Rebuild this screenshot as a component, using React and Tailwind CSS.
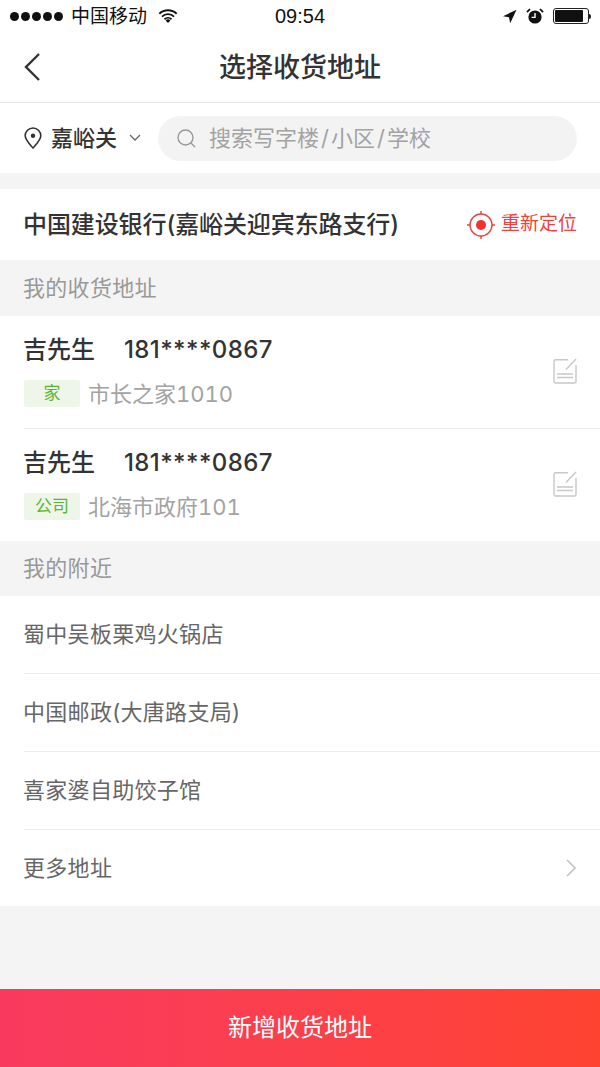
const FONT = "font-['Inter','Noto_Sans_CJK_SC',sans-serif]";

const addresses = [
  { id: 1, tag: '家', text: '市长之家1010', height: 'h-[113px]', border: 'border-b border-[#ececec]' },
  { id: 2, tag: '公司', text: '北海市政府101', height: 'h-[112px]', border: '' },
];

const nearby = ['蜀中吴板栗鸡火锅店', '中国邮政(大唐路支局)', '喜家婆自助饺子馆'];

function StatusBar() {
  return (
    <div className="relative flex h-[32px] items-center pl-[10px] pr-[9px] text-[#111]">
      <div className="flex items-center gap-[2px]">
        {[0, 1, 2, 3, 4].map((i) => (
          <span key={i} className="h-[9px] w-[9px] rounded-full bg-[#111]" />
        ))}
      </div>
      <span className="ml-[8px] text-[19px] leading-none">中国移动</span>
      <svg className="ml-[11px]" width="20" height="15" viewBox="0 0 20 15" fill="#111">
        <path d="M10 14 7.6 11.4a3.4 3.4 0 0 1 4.8 0z" />
        <path d="M5.9 9.6a5.9 5.9 0 0 1 8.2 0l-1.2 1.3a4.2 4.2 0 0 0-5.8 0z" />
        <path d="M3.3 6.9a9.6 9.6 0 0 1 13.4 0l-1.3 1.4a7.7 7.7 0 0 0-10.8 0z" />
        <path d="M.7 4.1a13.4 13.4 0 0 1 18.6 0L18 5.5a11.4 11.4 0 0 0-16 0z" />
      </svg>
      <span className="absolute left-[275px] top-[5px] font-['Liberation_Sans',sans-serif] text-[20px] leading-[22px]">09:54</span>
      <div className="ml-auto flex items-center">
        <svg width="15" height="15" viewBox="0 0 15 15" fill="#111">
          <path d="M14.5.8 1 7.2l6 1 1.2 6z" />
        </svg>
        <svg className="ml-[9px]" width="18" height="18" viewBox="0 0 18 18">
          <circle cx="9" cy="10" r="6.6" fill="#111" />
          <path d="M9 6v4.4H5.6" fill="none" stroke="#fff" strokeWidth="1.4" />
          <path d="M1 5.2 4 2M17 5.2 14 2" stroke="#111" strokeWidth="1.8" />
        </svg>
        <div className="ml-[9px] flex h-[16px] w-[36px] items-center rounded-[3px] border border-[#222] p-[1px]">
          <div className="h-full w-[28px] rounded-[1px] bg-[#111]" />
        </div>
        <div className="h-[5px] w-[2px] rounded-r-full bg-[#222]" />
      </div>
    </div>
  );
}

function EditIcon() {
  return (
    <svg className="-mt-[2px]" width="24" height="26" viewBox="0 0 24 26" fill="none" stroke="#c8c8c8" strokeWidth="1.4">
      <path d="M15 1.700H2.500A1.500 1.500 0 0 0 1 3.200V23.500A1.500 1.500 0 0 0 2.500 25H21.500A1.500 1.500 0 0 0 23 23.500V7" />
      <path d="M13 11.500 23 1" />
      <path d="M4 16H20M4 19.500H20" />
    </svg>
  );
}

function SectionHeader({ title, height }) {
  return (
    <div className={`flex items-center bg-[#f4f4f4] pl-[23px] text-[22px] tracking-[0.3px] text-[#999] ${height}`}>{title}</div>
  );
}

export default function App() {
  return (
    <div className={`flex h-[1067px] w-[600px] flex-col overflow-hidden bg-[#f4f4f4] ${FONT}`}>
      {/* Header */}
      <div className="bg-white">
        <StatusBar />
        <div className="relative flex h-[71px] items-center justify-center border-b border-[#e6e6e6]">
          <svg className="absolute left-[23px] top-[20px]" width="18" height="30" viewBox="0 0 18 30" fill="none" stroke="#333" strokeWidth="2.400">
            <path d="M16 2 3 15l13 13" />
          </svg>
          <h1 className="text-[27px] font-medium leading-none text-[#333]">选择收货地址</h1>
        </div>
      </div>

      {/* Search */}
      <div className="flex h-[70px] items-center bg-white pl-[24px] pr-[23px]">
        <svg width="18" height="22" viewBox="0 0 18 22" fill="none" stroke="#333" strokeWidth="1.600">
          <path d="M9 21C5 16.500 1.200 12.800 1.200 8.800a7.800 7.800 0 0 1 15.600 0C16.800 12.800 13 16.500 9 21z" />
          <circle cx="9" cy="8.800" r="2.200" fill="#333" stroke="none" />
        </svg>
        <span className="ml-[9px] text-[22px] font-medium leading-none text-[#333]">嘉峪关</span>
        <svg className="ml-[12px]" width="12" height="8" viewBox="0 0 12 8" fill="none" stroke="#666" strokeWidth="1.300">
          <path d="m1 1 5 5 5-5" />
        </svg>
        <div className="ml-[17px] flex h-[45px] flex-1 items-center rounded-full bg-[#f3f3f3] pl-[19px]">
          <svg width="19" height="19" viewBox="0 0 19 19" fill="none" stroke="#999" strokeWidth="1.400">
            <circle cx="8.500" cy="8.500" r="7.500" />
            <path d="m14 14 4 4" />
          </svg>
          <span className="ml-[13px] text-[22px] leading-none text-[#a3a3a3]">
            搜索写字楼<span className="mx-[2px]">/</span>小区<span className="mx-[2px]">/</span>学校
          </span>
        </div>
      </div>

      {/* Current location */}
      <div className="mt-[16px] flex h-[71px] items-center bg-white pl-[23px] pr-[23px]">
        <span className="text-[24px] font-medium leading-none tracking-[-0.1px] text-[#333]">中国建设银行(嘉峪关迎宾东路支行)</span>
        <svg className="ml-auto" width="28" height="28" viewBox="0 0 28 28" fill="none" stroke="#e8453f" strokeWidth="1.400">
          <circle cx="14" cy="14" r="11" />
          <circle cx="14" cy="14" r="5" fill="#f5302e" stroke="none" />
          <path d="M14 0v3M14 25v3M0 14h3M25 14h3" />
        </svg>
        <span className="ml-[6px] text-[19px] text-[#f2413c]">重新定位</span>
      </div>

      <SectionHeader title="我的收货地址" height="h-[56px]" />

      {/* Saved addresses */}
      <div className="bg-white pl-[24px]">
        {addresses.map((a) => (
          <div key={a.id} className={`flex items-center pr-[23px] ${a.height} ${a.border}`}>
            <div className="flex-1">
              <div className="-mt-[2px] flex items-center text-[24px] font-medium leading-[30px] text-[#333]">
                <span className="-ml-[1px] w-[101px]">吉先生</span>
                <span className="tracking-[0.4px]">181****0867</span>
              </div>
              <div className="mt-[15px] flex items-center">
                <span className="flex h-[27px] w-[56px] items-center justify-center rounded-[2px] bg-[#eef6ea] text-[17px] text-[#5cb531]">
                  {a.tag}
                </span>
                <span className="ml-[8px] text-[22px] leading-none tabular-nums text-[#a3a3a3]">{a.text}</span>
              </div>
            </div>
            <EditIcon />
          </div>
        ))}
      </div>

      <SectionHeader title="我的附近" height="h-[55px]" />

      {/* Nearby */}
      <div className="bg-white pl-[24px] text-[22px] tracking-[0.3px] text-[#666]">
        {nearby.map((name) => (
          <div key={name} className="flex h-[78px] items-center border-b border-[#ececec]">
            <span className="-ml-[1px]">{name}</span>
          </div>
        ))}
        <div className="flex h-[76px] items-center pr-[24px]">
          <span className="-ml-[1px]">更多地址</span>
          <svg className="ml-auto" width="10" height="18" viewBox="0 0 10 18" fill="none" stroke="#c4c4c4" strokeWidth="1.600">
            <path d="m1 1 8 8-8 8" />
          </svg>
        </div>
      </div>

      {/* Add button */}
      <div className="mt-auto flex h-[78px] items-center justify-center bg-gradient-to-r from-[#f93a5f] to-[#fe4330] text-[24px] text-white">
        新增收货地址
      </div>
    </div>
  );
}
